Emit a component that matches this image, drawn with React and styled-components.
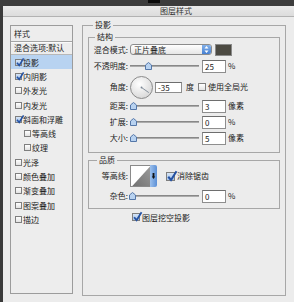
import React from "react";
import styled, { createGlobalStyle } from "styled-components";

const GlobalStyle = createGlobalStyle`
  html, body {
    margin: 0;
    padding: 0;
    background: #3a3a3a;
  }
  body {
    font-family: "Noto Sans CJK SC", "Liberation Sans", sans-serif;
    color: #222;
  }
`;

const effects = [
  { label: "投影", checked: true, active: true },
  { label: "内阴影", checked: true },
  { label: "外发光" },
  { label: "内发光" },
  { label: "斜面和浮雕", checked: true },
  { label: "等高线", sub: true },
  { label: "纹理", sub: true },
  { label: "光泽" },
  { label: "颜色叠加" },
  { label: "渐变叠加" },
  { label: "图案叠加" },
  { label: "描边" },
];

function CheckBox({ size = 7, checked }) {
  return (
    <Box $size={size} $checked={checked}>
      {checked && (
        <CheckMark viewBox="0 0 8 8" width={size + 1} height={size + 1}>
          <path d="M1 3.8 L3.2 6.4 L7.6 -0.6" fill="none" stroke="#2452a4" strokeWidth="1.6" />
        </CheckMark>
      )}
    </Box>
  );
}

function Slider({ knob }) {
  return (
    <SliderWrap>
      <Track />
      <Knob style={{ left: knob - 3 }} viewBox="0 0 7 8" width="7" height="8">
        <path d="M3.5 0.5 L6.5 3 L6.5 7.5 L0.5 7.5 L0.5 3 Z" fill="#b8d2f0" stroke="#5477a8" strokeWidth="1" />
      </Knob>
    </SliderWrap>
  );
}

function SliderRow({ label, knob, value, unit }) {
  return (
    <>
      <Label>{label}</Label>
      <Controls>
        <Slider knob={knob} />
        <Field $width={24} $gap={3}>{value}</Field>
        <Unit>{unit}</Unit>
      </Controls>
    </>
  );
}

function App() {
  return (
    <Screen>
      <GlobalStyle />
      <TopStrip>
        <Blob />
      </TopStrip>
      <Dialog>
        <TitleBar>图层样式</TitleBar>
        <Body>
          <StyleList>
            <ListHeader>样式</ListHeader>
            <BlendRow>混合选项:默认</BlendRow>
            {effects.map((e) => (
              <EffectRow key={e.label} $sub={e.sub} $active={e.active}>
                <CheckBox checked={e.checked} />
                <span>{e.label}</span>
              </EffectRow>
            ))}
          </StyleList>

          <Group $width={204} $height={275} $top={-4} $pad="0 5px">
            <Caption $offset={5}>投影</Caption>
            <Group $height={120} $top={4}>
              <Caption $offset={6}>结构</Caption>
              <FormGrid $rows="13px 20px 22px 16px 16px 16px" $pad="2px 0 5px 0">
                <Label>混合模式:</Label>
                <Controls>
                  <Select>
                    <span>正片叠底</span>
                    <Stepper>
                      <svg viewBox="0 0 9 11" width="9" height="11">
                        <path d="M2.5 4.5 L4.5 2 L6.5 4.5 Z M2.5 6.5 L4.5 9 L6.5 6.5 Z" fill="#fff" />
                      </svg>
                    </Stepper>
                  </Select>
                  <Swatch />
                </Controls>

                <SliderRow label="不透明度:" knob={18} value="25" unit="%" />

                <Label>角度:</Label>
                <Controls>
                  <Dial viewBox="0 0 23 23" width="23" height="23">
                    <defs>
                      <radialGradient id="dialFill" cx="40%" cy="35%" r="70%">
                        <stop offset="0" stopColor="#ffffff" />
                        <stop offset="1" stopColor="#d6d6d6" />
                      </radialGradient>
                    </defs>
                    <circle cx="11.5" cy="11.5" r="11" fill="url(#dialFill)" stroke="#8a8a8a" />
                    <line x1="11.5" y1="11.5" x2="18.8" y2="16.6" stroke="#7b8794" strokeWidth="0.9" />
                    <circle cx="11.5" cy="11.5" r="0.9" fill="#7b8794" />
                  </Dial>
                  <Field $width={27} $gap={2} $height={11}>-35</Field>
                  <Unit $gap={4}>度</Unit>
                  <CheckGap $gap={4}>
                    <CheckBox size={8} />
                  </CheckGap>
                  <Unit $gap={2}>使用全局光</Unit>
                </Controls>

                <SliderRow label="距离:" knob={3} value="3" unit="像素" />
                <SliderRow label="扩展:" knob={3} value="0" unit="%" />
                <SliderRow label="大小:" knob={3} value="5" unit="像素" />
              </FormGrid>
            </Group>

            <Group $height={53} $top={3}>
              <Caption $offset={8}>品质</Caption>
              <FormGrid $rows="24px 16px" $pad="0 0 3px 0">
                <Label>等高线:</Label>
                <Controls>
                  <ContourBox>
                    <svg viewBox="0 0 20 22" width="20" height="22">
                      <defs>
                        <linearGradient id="contourFill" x1="0" y1="1" x2="1" y2="0">
                          <stop offset="0" stopColor="#6e6e6e" />
                          <stop offset="1" stopColor="#9a9a9a" />
                        </linearGradient>
                      </defs>
                      <path d="M0 22 L20 0 L20 22 Z" fill="url(#contourFill)" />
                    </svg>
                  </ContourBox>
                  <ContourArrow>
                    <svg viewBox="0 0 7 22" width="7" height="22">
                      <path d="M2.6 8 L4.4 8 L4.4 11.5 L2.6 11.5 Z M1.8 11.5 L5.2 11.5 L3.5 14 Z" fill="#111" />
                    </svg>
                  </ContourArrow>
                  <CheckGap $gap={9}>
                    <CheckBox size={9} checked />
                  </CheckGap>
                  <Unit $gap={2}>消除锯齿</Unit>
                </Controls>
                <SliderRow label="杂色:" knob={2} value="0" unit="%" />
              </FormGrid>
            </Group>

            <KnockoutRow>
              <CheckBox size={8} checked />
              <span>图层挖空投影</span>
            </KnockoutRow>
          </Group>
        </Body>
      </Dialog>
    </Screen>
  );
}

export default App;

const Screen = styled.div`
  width: 294px;
  height: 302px;
  background: #3a3a3a;
  display: flex;
  flex-direction: column;
  overflow: hidden;
`;

const TopStrip = styled.div`
  height: 6px;
  flex: none;
  display: flex;
  background: #3c3c3c;
`;

const Blob = styled.div`
  margin-left: 148px;
  width: 12px;
  height: 3px;
  background: #0a0a0a;
`;

const Dialog = styled.div`
  flex: 1;
  margin-left: 3px;
  background: #ececec;
  display: flex;
  flex-direction: column;
`;

const TitleBar = styled.div`
  height: 10px;
  flex: none;
  border-bottom: 1px solid #b2b2b2;
  background: linear-gradient(#eaeaea, #dcdcdc);
  font-size: 8px;
  line-height: 10px;
  color: #333;
  padding-left: 157px;
`;

const Body = styled.div`
  display: flex;
  align-items: flex-start;
  gap: 9px;
  padding: 8px 0 0 7px;
`;

const StyleList = styled.div`
  width: 63px;
  height: 269px;
  box-sizing: border-box;
  border: 1px solid #9c9c9c;
  background: #ededed;
  display: flex;
  flex-direction: column;
  font-size: 8px;
  flex: none;
`;

const ListHeader = styled.div`
  height: 15px;
  line-height: 15px;
  padding-left: 3px;
  border-bottom: 1px solid #a4a4a4;
  box-shadow: 0 1px 0 #fafafa;
`;

const BlendRow = styled.div`
  height: 12px;
  line-height: 12px;
  padding-left: 3px;
  border-bottom: 1px solid #b8b8b8;
`;

const EffectRow = styled.div`
  height: 14.3px;
  display: flex;
  align-items: center;
  gap: 1px;
  padding-left: ${(p) => (p.$sub ? 13 : 4)}px;
  background: ${(p) => (p.$active ? "#b8d3f1" : "transparent")};
  white-space: nowrap;
`;

const Box = styled.div`
  position: relative;
  width: ${(p) => p.$size}px;
  height: ${(p) => p.$size}px;
  box-sizing: border-box;
  border: 1px solid #7f7f7f;
  background: ${(p) =>
    p.$checked ? "linear-gradient(#d6e5f7, #a7c3e8)" : "linear-gradient(#ffffff, #e2e2e2)"};
  flex: none;
`;

const CheckMark = styled.svg`
  position: absolute;
  left: 0;
  top: -1px;
  overflow: visible;
`;

const Group = styled.fieldset`
  margin: ${(p) => p.$top || 0}px 0 0 0;
  padding: ${(p) => p.$pad || "0"};
  border: 1px solid #a7a7a7;
  box-sizing: border-box;
  min-width: 0;
  width: ${(p) => (p.$width ? `${p.$width}px` : "auto")};
  height: ${(p) => p.$height}px;
  flex: none;
`;

const Caption = styled.legend`
  font-size: 8px;
  line-height: 8px;
  padding: 0 2px;
  margin-left: ${(p) => p.$offset}px;
`;

const FormGrid = styled.div`
  display: grid;
  grid-template-columns: 39px 1fr;
  grid-template-rows: ${(p) => p.$rows};
  column-gap: 2px;
  align-items: center;
  padding: ${(p) => p.$pad};
  font-size: 8px;
`;

const Label = styled.div`
  text-align: right;
  white-space: nowrap;
  line-height: 10px;
`;

const Controls = styled.div`
  display: flex;
  align-items: center;
  white-space: nowrap;
`;

const Select = styled.div`
  width: 82px;
  height: 11px;
  box-sizing: border-box;
  border: 1px solid #8c8c8c;
  border-radius: 3px;
  background: linear-gradient(#ffffff, #e6e6e6);
  display: flex;
  align-items: center;
  justify-content: space-between;
  padding-left: 3px;
  line-height: 9px;
  overflow: hidden;
`;

const Stepper = styled.div`
  width: 9px;
  height: 11px;
  display: flex;
  background: linear-gradient(#8ab6ec, #3f7bd0);
  border-radius: 0 3px 3px 0;
`;

const Swatch = styled.div`
  width: 17px;
  height: 12px;
  margin-left: 3px;
  box-sizing: border-box;
  border: 1px solid #8a8a8a;
  background: #4c4a42;
`;

const SliderWrap = styled.div`
  position: relative;
  width: 69px;
  height: 8px;
  display: flex;
  align-items: center;
  flex: none;
`;

const Track = styled.div`
  width: 100%;
  height: 2px;
  background: linear-gradient(#777, #bdbdbd);
`;

const Knob = styled.svg`
  position: absolute;
  top: 0;
`;

const Field = styled.div`
  width: ${(p) => p.$width}px;
  height: ${(p) => p.$height || 13}px;
  margin-left: ${(p) => p.$gap}px;
  box-sizing: border-box;
  border: 1px solid #8e8e8e;
  border-top-color: #6e6e6e;
  background: #fff;
  padding-left: 2px;
  display: flex;
  align-items: center;
  flex: none;
`;

const Unit = styled.span`
  margin-left: ${(p) => p.$gap ?? 2}px;
  line-height: 10px;
`;

const Dial = styled.svg`
  flex: none;
`;

const CheckGap = styled.div`
  margin-left: ${(p) => p.$gap}px;
  display: flex;
`;

const ContourBox = styled.div`
  width: 20px;
  height: 22px;
  box-sizing: border-box;
  border: 1px solid #8a8a8a;
  border-right: none;
  background: #fff;
  display: flex;
  overflow: hidden;
  flex: none;
  svg {
    display: block;
  }
`;

const ContourArrow = styled.div`
  width: 7px;
  height: 22px;
  display: flex;
  background: linear-gradient(90deg, #9cc0ec, #5b8fd6);
  border-radius: 0 2px 2px 0;
  flex: none;
`;

const KnockoutRow = styled.div`
  display: flex;
  align-items: center;
  gap: 2px;
  height: 10px;
  margin-top: 3px;
  padding-left: 44px;
  font-size: 8px;
  white-space: nowrap;
`;
